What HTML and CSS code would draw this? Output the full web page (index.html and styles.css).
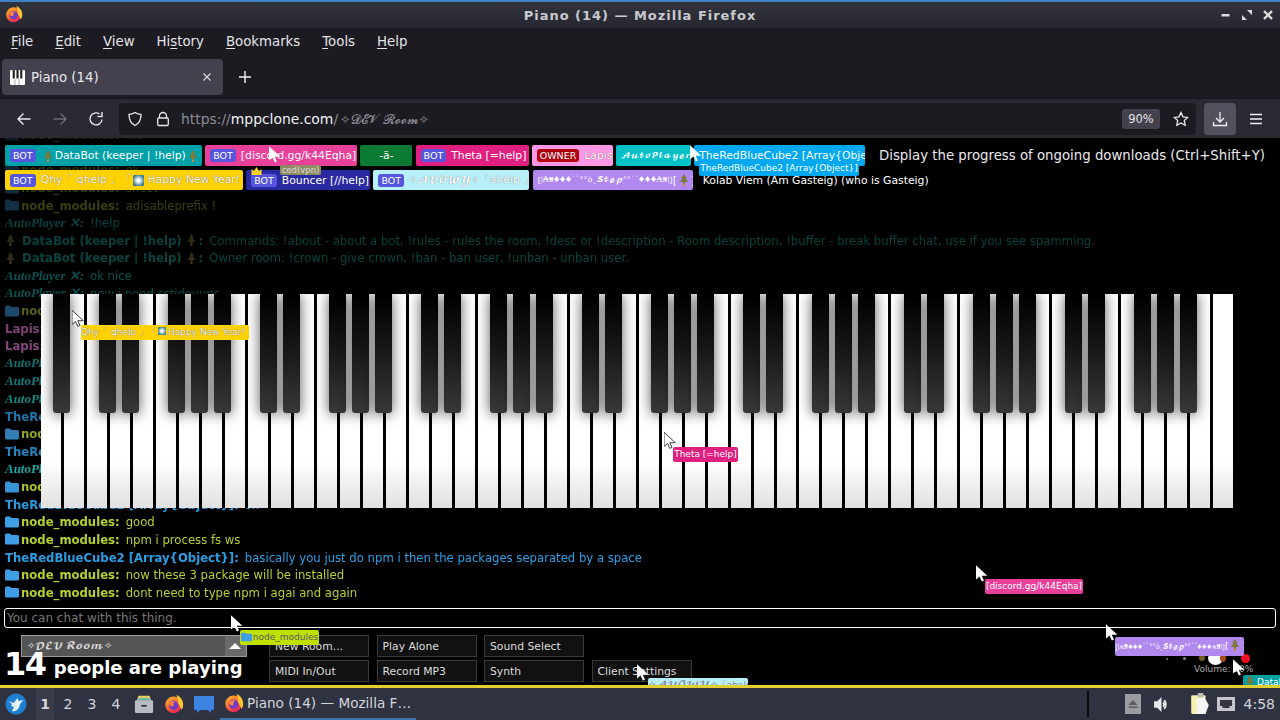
FILE: index.html
```html
<!DOCTYPE html>
<html lang="en">
<head>
<meta charset="utf-8">
<title>Piano (14) — Mozilla Firefox</title>
<link rel="stylesheet" href="styles.css">
</head>
<body>
<svg class="defs" width="0" height="0" aria-hidden="true">
  <defs>
    <linearGradient id="ffg" x1="0" y1="0" x2="0.6" y2="1"><stop offset="0" stop-color="#ffbd2e"/><stop offset=".55" stop-color="#ff6a2b"/><stop offset="1" stop-color="#e5245e"/></linearGradient>
    <symbol id="fx" viewBox="0 0 24 24">
      <circle cx="11.5" cy="13" r="10" fill="url(#ffg)"/>
      <path d="M15 1c4 2 8 6 8 12 0 3-1 5-2 6l-4-8c0-4-1-7-2-10z" fill="#ffc72e"/>
      <circle cx="11.5" cy="13.5" r="5.6" fill="#6f3bc4"/>
      <path d="M6 12c2-3 5-4 8-3l-3 2c1 1 1 3-1 4-2 0-3-1-4-3z" fill="#ff8a3c"/>
    </symbol>
    <symbol id="arrow" viewBox="0 0 14 18">
      <path d="M0 0v15.500l3.800-3.300 2.500 5.300 2.300-1-2.400-5.100h6z" fill="#fff"/>
    </symbol>
    <symbol id="tree" viewBox="0 0 10 12">
      <path d="M5 0l2.500 4H6.500L9 8H6v2.500H4V8H1l2.500-4H2.500z" fill="#7c7a3a"/>
      <rect x="4" y="9.500" width="2" height="2.500" fill="#c98a3c"/>
    </symbol>
    <symbol id="folder" viewBox="0 0 14 12">
      <path d="M0 2a1.500 1.500 0 0 1 1.500-1.500h3.500l1.500 1.500h6a1.500 1.500 0 0 1 1.500 1.500v6.500a1.500 1.500 0 0 1-1.500 1.500h-11a1.500 1.500 0 0 1-1.500-1.500z" fill="#3f9fe6"/>
    </symbol>
  </defs>
</svg>

<header class="titlebar">
  <svg class="ff-title"><use href="#fx"/></svg>
  <span class="win-title">Piano (14) — Mozilla Firefox</span>
  <div class="win-btns">
    <svg viewBox="0 0 12 12"><rect x="1.500" y="5" width="8" height="2.500" fill="#ddd"/></svg>
    <svg viewBox="0 0 12 12"><path d="M6 1h5v5zM1 6l5 5H1z" fill="#ddd"/></svg>
    <svg viewBox="0 0 12 12"><path d="M2 2l8 8M10 2l-8 8" stroke="#ddd" stroke-width="2.400"/></svg>
  </div>
</header>

<nav class="menubar">
  <span><u>F</u>ile</span><span><u>E</u>dit</span><span><u>V</u>iew</span><span>Hi<u>s</u>tory</span><span><u>B</u>ookmarks</span><span><u>T</u>ools</span><span><u>H</u>elp</span>
</nav>

<div class="tabbar">
  <div class="tab">
    <svg class="fav" viewBox="0 0 14 14"><rect width="14" height="14" rx="1" fill="#fff"/><path d="M2.500 0h2v8h-2zM6 0h2v8H6zM9.500 0h2v8h-2z" fill="#222"/><path d="M4.600 8.500v5.500M8.500 8.500v5.500" stroke="#888" stroke-width=".7"/></svg>
    <span class="tab-label">Piano (14)</span>
    <svg class="tab-x" viewBox="0 0 10 10"><path d="M1.500 1.500l7 7M8.500 1.500l-7 7" stroke="#d8d8dc" stroke-width="1.200"/></svg>
  </div>
  <svg class="plus" viewBox="0 0 14 14"><path d="M7 1v12M1 7h12" stroke="#f0f0f4" stroke-width="1.400"/></svg>
</div>

<div class="navbar">
  <svg class="nav-ico back" viewBox="0 0 16 16"><path d="M14.500 8H2M7.500 2.500L2 8l5.500 5.500" fill="none" stroke="#e8e8ec" stroke-width="1.400"/></svg>
  <svg class="nav-ico fwd" viewBox="0 0 16 16"><path d="M1.500 8H14M8.500 2.500L14 8l-5.500 5.500" fill="none" stroke="#6c6b74" stroke-width="1.400"/></svg>
  <svg class="nav-ico reload" viewBox="0 0 16 16"><path d="M14 8.500A6 6 0 1 1 11.500 3M14 1v4.500H9.500" fill="none" stroke="#e8e8ec" stroke-width="1.400"/></svg>
  <div class="urlbar">
    <svg class="url-ico" viewBox="0 0 16 16"><path d="M8 1.500c2 1.300 4 1.800 6 1.800 0 5.700-2 9.400-6 11.200-4-1.800-6-5.500-6-11.200 2 0 4-.5 6-1.800z" fill="none" stroke="#e8e8ec" stroke-width="1.300"/></svg>
    <svg class="url-ico lock" viewBox="0 0 16 16"><path d="M4.500 7V5a3.500 3.500 0 0 1 7 0v2" fill="none" stroke="#e8e8ec" stroke-width="1.300"/><rect x="2.700" y="7" width="10.600" height="7.500" rx="1.200" fill="none" stroke="#e8e8ec" stroke-width="1.300"/></svg>
    <span class="url"><span class="url-dim">https://</span>mppclone.com<span class="url-dim">/</span><span class="url-room">✧𝓓𝓔𝓥 𝓡𝓸𝓸𝓶✧</span></span>
    <span class="zoom-pill">90%</span>
    <svg class="star" viewBox="0 0 16 16"><path d="M8 1.500l2 4.300 4.700.6-3.400 3.200.9 4.700L8 12l-4.200 2.300.9-4.700L1.300 6.400 6 5.800z" fill="none" stroke="#e8e8ec" stroke-width="1.300"/></svg>
  </div>
  <div class="dl-btn"><svg viewBox="0 0 16 16"><path d="M8 1v9.500M4 7l4 4 4-4M1.500 11v3.500h13V11" fill="none" stroke="#f0f0f4" stroke-width="1.300"/></svg></div>
  <svg class="burger" viewBox="0 0 14 12"><path d="M1 1.500h12M1 6h12M1 10.500h12" stroke="#f0f0f4" stroke-width="1.400"/></svg>
</div>

<main class="page">
  <section class="stage">
    <div class="chat">
      <div class="msg"><svg class="fi"><use href="#folder"/></svg><b class="nm">node_modules:</b> <span class="nm">Int</span></div>
      <div class="msg"><svg class="fi"><use href="#folder"/></svg><b class="nm">node_modules:</b> <span class="nm">snpm</span></div>
      <div class="msg"><svg class="fi"><use href="#folder"/></svg><b class="nm">node_modules:</b> <span class="nm">ok</span></div>
      <div class="msg"><svg class="fi"><use href="#folder"/></svg><b class="nm">node_modules:</b> <span class="nm">sheet</span></div>
      <div class="msg"><svg class="fi"><use href="#folder"/></svg><b class="nm">node_modules:</b> <span class="nm">adisableprefix !</span></div>
      <div class="msg"><b class="ap">AutoPlayer ✕:</b> <span class="at">!help</span></div>
      <div class="msg"><svg class="tr"><use href="#tree"/></svg><b class="db">DataBot (keeper | !help)</b><svg class="tr"><use href="#tree"/></svg><b class="db">:</b> <span class="dt">Commands: !about - about a bot, !rules - rules the room, !desc or !description - Room description, !buffer - break buffer chat, use if you see spamming.</span></div>
      <div class="msg"><svg class="tr"><use href="#tree"/></svg><b class="db">DataBot (keeper | !help)</b><svg class="tr"><use href="#tree"/></svg><b class="db">:</b> <span class="dt">Owner room: !crown - give crown, !ban - ban user, !unban - unban user.</span></div>
      <div class="msg"><b class="ap">AutoPlayer ✕:</b> <span class="at">ok nice</span></div>
      <div class="msg"><b class="ap">AutoPlayer ✕:</b> <span class="at">now i need sstidevups</span></div>
      <div class="msg"><svg class="fi"><use href="#folder"/></svg><b class="nm">node_modules:</b> <span class="nm">no</span></div>
      <div class="msg"><b class="lp">Lapis:</b> <span class="lp">ok</span></div>
      <div class="msg"><b class="lp">Lapis:</b> <span class="lp">ok</span></div>
      <div class="msg"><b class="ap">AutoPlayer ✕:</b> <span class="at">ok</span></div>
      <div class="msg"><b class="ap">AutoPlayer ✕:</b> <span class="at">ok</span></div>
      <div class="msg"><b class="ap">AutoPlayer ✕:</b> <span class="at">ok</span></div>
      <div class="msg"><b class="bl">TheRedBlueCube2 [Array{Object}]:</b> <span class="bl">ok</span></div>
      <div class="msg"><svg class="fi"><use href="#folder"/></svg><b class="nm">node_modules:</b> <span class="nm">ok</span></div>
      <div class="msg"><b class="bl">TheRedBlueCube2 [Array{Object}]:</b> <span class="bl">ok</span></div>
      <div class="msg"><b class="ap">AutoPlayer ✕:</b> <span class="at">ok</span></div>
      <div class="msg"><svg class="fi"><use href="#folder"/></svg><b class="nm">node_modules:</b> <span class="nm">ok</span></div>
      <div class="msg"><b class="bl">TheRedBlueCube2 [Array{Object}]:</b> <span class="bl">ok</span></div>
      <div class="msg"><svg class="fi"><use href="#folder"/></svg><b class="nm">node_modules:</b> <span class="nm">good</span></div>
      <div class="msg"><svg class="fi"><use href="#folder"/></svg><b class="nm">node_modules:</b> <span class="nm">npm i process fs ws</span></div>
      <div class="msg"><b class="bl">TheRedBlueCube2 [Array{Object}]:</b> <span class="bl">basically you just do npm i then the packages separated by a space</span></div>
      <div class="msg"><svg class="fi"><use href="#folder"/></svg><b class="nm">node_modules:</b> <span class="nm">now these 3 package will be installed</span></div>
      <div class="msg"><svg class="fi"><use href="#folder"/></svg><b class="nm">node_modules:</b> <span class="nm">dont need to type npm i agai and again</span></div>
    </div>

    <div class="users">
      <div class="urow">
        <span class="pill p-databot w197"><b class="bot">BOT</b><svg class="tr2"><use href="#tree"/></svg>DataBot (keeper | !help)<svg class="tr2"><use href="#tree"/></svg></span>
        <span class="pill p-discord w152"><b class="bot">BOT</b>[discord.gg/k44Eqha]</span>
        <span class="pill p-green w52 center">-ä-</span>
        <span class="pill p-theta w113"><b class="bot">BOT</b>Theta [=help]</span>
        <span class="pill p-lapis w81"><b class="owner">OWNER</b>Lapis</span>
        <span class="pill p-auto w75"><span class="script auto">𝓐𝓾𝓽𝓸𝓟𝓵𝓪𝔂𝓮𝓻 ✕</span></span>
        <span class="pill p-cube w171">TheRedBlueCube2 [Array{Object}]</span>
      </div>
      <div class="urow r2">
        <span class="pill p-qhy w238"><b class="bot">BOT</b>Qhy「 qhelp 」「<span class="fw"></span>Happy New Year! 」</span>
        <span class="pill p-bouncer w124"><b class="bot">BOT</b>Bouncer [//help]</span>
        <span class="pill p-avowy w156"><b class="bot">BOT</b><span class="script">✧𝓐𝓥𝓞𝓦𝓨✧</span>「ahelp 」</span>
        <span class="pill p-step w160"><span class="script thin">[|₳₦♦♦♦``°°ò¸𝓢𝓽𝓮𝓹°°´´♦♦♦₳₦|]</span>[<svg class="tr2"><use href="#tree"/></svg>]</span>
        <span class="pill p-kolab">Kolab Viem (Am Gasteig) (who is Gasteig)</span>
      </div>
    </div>

    <div class="piano">
      <i class="k b"></i><i class="k"></i>
      <i class="k b"></i><i class="k b"></i><i class="k"></i><i class="k b"></i><i class="k b"></i><i class="k b"></i><i class="k"></i>
      <i class="k b"></i><i class="k b"></i><i class="k"></i><i class="k b"></i><i class="k b"></i><i class="k b"></i><i class="k"></i>
      <i class="k b"></i><i class="k b"></i><i class="k"></i><i class="k b"></i><i class="k b"></i><i class="k b"></i><i class="k"></i>
      <i class="k b"></i><i class="k b"></i><i class="k"></i><i class="k b"></i><i class="k b"></i><i class="k b"></i><i class="k"></i>
      <i class="k b"></i><i class="k b"></i><i class="k"></i><i class="k b"></i><i class="k b"></i><i class="k b"></i><i class="k"></i>
      <i class="k b"></i><i class="k b"></i><i class="k"></i><i class="k b"></i><i class="k b"></i><i class="k b"></i><i class="k"></i>
      <i class="k b"></i><i class="k b"></i><i class="k"></i><i class="k b"></i><i class="k b"></i><i class="k b"></i><i class="k"></i>
      <i class="k"></i>
    </div>
  </section>

  <div class="chat-input">You can chat with this thing.</div>

  <footer class="controls">
    <div class="room-box">
      <div class="room-select"><span class="room-name">✧𝓓𝓔𝓥 𝓡𝓸𝓸𝓶✧</span><span class="room-arrow"></span></div>
      <div class="count"><span class="count-n">14</span> people are playing</div>
    </div>
    <div class="btns">
      <div class="btn">New Room...</div><div class="btn">Play Alone</div><div class="btn">Sound Select</div><div class="btn ghost"></div>
      <div class="btn">MIDI In/Out</div><div class="btn">Record MP3</div><div class="btn">Synth</div><div class="btn">Client Settings</div>
    </div>
    <div class="volume">
      <span class="dot d1"></span><span class="dot d2"></span><span class="dot d3"></span><span class="knob"></span><span class="dot d5"></span><span class="dot d6"></span>
      <span class="vol-label">Volume: 30%</span>
    </div>
  </footer>

  <div class="mark m1"><svg class="cur"><use href="#arrow"/></svg></div>
  <div class="mark m2"><svg class="cur"><use href="#arrow"/></svg></div>
  <div class="mark m3"><svg class="cur"><use href="#arrow"/></svg></div>
  <div class="mark m4"><svg class="cur"><use href="#arrow"/></svg></div>
  <div class="mark m5"><svg class="cur"><use href="#arrow"/></svg></div>
  <div class="mark m6"><svg class="cur"><use href="#arrow"/></svg></div>
  <div class="mark m7"><svg class="cur"><use href="#arrow"/></svg></div>
  <div class="mark m8"><svg class="cur"><use href="#arrow"/></svg></div>
  <div class="mark m9"><svg class="cur"><use href="#arrow"/></svg></div>

  <span class="tag t-ced">ced(vpn)</span>
  <svg class="crown" viewBox="0 0 10 8"><path d="M0 8V2l2.500 2L5 0l2.500 4L10 2v6z" fill="#ffd21e"/></svg>
  <span class="tag t-cube">TheRedBlueCube2 [Array{Object}]</span>
  <span class="tag t-qhy">Qhy「 qhelp 」「<span class="fw small"></span>Happy New Year! 」</span>
  <span class="tag t-theta">Theta [=help]</span>
  <span class="tag t-discord">[discord.gg/k44Eqha]</span>
  <span class="tag t-node"><svg class="fi2"><use href="#folder"/></svg>node_modules</span>
  <span class="tag t-step"><span class="script thin">[|₳₦♦♦♦``°°ò¸𝓢𝓽𝓮𝓹°°´´♦♦♦₳₦|]</span>[<svg class="tr2"><use href="#tree"/></svg>]</span>
  <span class="tag t-avowy"><span class="script">✧𝓐𝓥𝓞𝓦𝓨✧</span>「ahelp 」</span>
  <span class="tag t-data"><svg class="tr2"><use href="#tree"/></svg>DataBot (keeper | !help)</span>

  <div class="tooltip">Display the progress of ongoing downloads (Ctrl+Shift+Y)</div>
</main>

<footer class="taskbar">
  <svg class="start" viewBox="0 0 22 22"><circle cx="11" cy="11" r="10.500" fill="#1f7fd0"/><path d="M3.500 8l5 2 4-5 1 3 5-1-3.500 4c-.5 5-4 8-8 7l2-4-3-1 1-2z" fill="#e8f2fb"/></svg>
  <div class="workspaces"><span class="ws on">1</span><span class="ws">2</span><span class="ws">3</span><span class="ws">4</span></div>
  <svg class="launcher" viewBox="0 0 22 22"><path d="M3 7l2-5h12l2 5z" fill="#f0d060"/><path d="M3 7l2-3h12l2 3z" fill="#6fc0a8"/><rect x="1" y="7" width="20" height="14" rx="1.500" fill="#b8bcc4"/><rect x="8" y="12" width="6" height="2" fill="#3a3c44"/></svg>
  <svg class="launcher" viewBox="0 0 24 24"><use href="#fx"/></svg>
  <svg class="launcher" viewBox="0 0 20 18"><path d="M0 1h20v14h-3v3l-3-3H6l-3 3v-3H0z" fill="#3f83e0"/></svg>
  <div class="task"><svg class="task-ico"><use href="#fx"/></svg><span class="task-label">Piano (14) — Mozilla F…</span></div>
  <div class="tray">
    <span class="tray-sep"></span>
    <span class="eject"><svg viewBox="0 0 12 12"><path d="M6 2l4.500 5h-9zM1.500 8.500h9V10h-9z" fill="#5a5c66"/></svg></span>
    <svg class="tray-ico spk" viewBox="0 0 16 16"><path d="M1 5h3l4-4v14l-4-4H1z" fill="#e8e8ec"/><path d="M10.500 4a6 6 0 0 1 0 8M9.500 6a3 3 0 0 1 0 4" fill="none" stroke="#e8e8ec" stroke-width="1.800"/></svg>
    <svg class="tray-ico clip" viewBox="0 0 18 20"><rect x="1" y="2" width="13" height="17" rx="1" fill="#f5efb0"/><path d="M7 0h5v4H7z" fill="#bbb"/><path d="M6 5l7-1 4 7-3 8H6z" fill="#f4f4f4"/></svg>
    <svg class="tray-ico net" viewBox="0 0 20 16"><path d="M1 1h18v14H1z" fill="#c4c6cc"/><path d="M4 4h12v6h-2.500v2h-7v-2H4z" fill="#34363f"/></svg>
    <span class="clock">4:58</span>
  </div>
</footer>
</body>
</html>
```
FILE: styles.css
```css
* { box-sizing: border-box; }
html, body { margin: 0; height: 720px; overflow: hidden; background: #000; }
body { display: flex; flex-direction: column; font-family: "DejaVu Sans", sans-serif; color: #e8e8ec; }
.defs { position: absolute; }

/* window title */
.titlebar { height: 28px; flex: none; display: flex; align-items: center; justify-content: center; position: relative; border-top: 2px solid #3f7fc4; background: linear-gradient(#32343d, #262730); }
.ff-title { width: 18px; height: 18px; position: absolute; left: 5px; top: 3px; }
.win-title { font-size: 13px; font-weight: 700; color: #c9cad0; letter-spacing: .98px; }
.win-btns { position: absolute; right: 6px; top: 7px; display: flex; gap: 9px; }
.win-btns svg { width: 12px; height: 12px; }

/* menus */
.menubar { height: 27px; flex: none; background: #1c1b22; display: flex; align-items: center; gap: 22px; padding-left: 11px; font-size: 13.300px; color: #e4e4e8; }
.menubar u { text-underline-offset: 2px; }

/* tabs */
.tabbar { height: 43px; flex: none; background: #1c1b22; display: flex; align-items: center; padding-left: 2px; }
.tab { width: 221px; height: 36px; margin-top: 1px; background: #42414d; border-radius: 4px; display: flex; align-items: center; padding-left: 8px; font-size: 13.300px; }
.fav { width: 15px; height: 15px; flex: none; }
.tab-label { margin-left: 6px; flex: 1; color: #e8e8ec; }
.tab-x { width: 10px; height: 10px; margin-right: 11px; }
.plus { width: 14px; height: 14px; margin-left: 15px; }

/* toolbar */
.navbar { height: 40px; flex: none; background: #2b2a33; border-top: 1px solid #16151b; display: flex; align-items: center; }
.nav-ico { width: 16px; height: 16px; flex: none; }
.back { margin-left: 16px; }
.fwd { margin-left: 20px; }
.reload { margin-left: 20px; }
.urlbar { width: 1077px; height: 32px; margin-left: 15px; background: #1c1b22; border-radius: 4px; display: flex; align-items: center; padding-left: 8px; }
.url-ico { width: 16px; height: 16px; flex: none; }
.url-ico.lock { margin-left: 12px; }
.url { margin-left: 10px; padding-top: 1px; font-size: 13.900px; color: #f0f0f4; flex: 1; white-space: nowrap; }
.url-dim { color: #8d8c95; }
.url-room { color: #8d8c95; font-size: 12.500px; margin-left: 2px; }
.zoom-pill { width: 38px; height: 20px; background: #42414d; border-radius: 3px; font-size: 11.500px; text-align: center; line-height: 20px; color: #e4e4e8; }
.star { width: 16px; height: 16px; margin-left: 13px; margin-right: 7px; }
.dl-btn { width: 32px; height: 32px; margin-left: 8px; background: #52525e; border-radius: 4px; display: flex; align-items: center; justify-content: center; }
.dl-btn svg { width: 16px; height: 16px; }
.burger { width: 14px; height: 12px; margin-left: 13px; }

/* page */
.page { height: 550px; flex: none; position: relative; background: #000; display: flex; flex-direction: column; overflow: hidden; }
.stage { height: 463px; flex: none; position: relative; overflow: hidden; z-index: 0; }
.chat { position: absolute; left: 0; right: 0; top: 0; bottom: 0; display: flex; flex-direction: column; justify-content: flex-end; padding-left: 5px; font-family: "DejaVu Sans Condensed", "DejaVu Sans", sans-serif; font-size: 12.960px; -webkit-mask-image: linear-gradient(rgba(0,0,0,.18) 0, rgba(0,0,0,.3) 70px, rgba(0,0,0,.45) 170px, rgba(0,0,0,.9) 340px, #000 380px); mask-image: linear-gradient(rgba(0,0,0,.18) 0, rgba(0,0,0,.3) 70px, rgba(0,0,0,.45) 170px, rgba(0,0,0,.9) 340px, #000 380px); }
.msg { height: 17.600px; flex: none; display: flex; align-items: center; white-space: pre; gap: 6px; }
.fi { width: 14px; height: 12px; margin-right: -4px; flex: none; }
.tr { width: 11px; height: 12px; flex: none; }
.db + .tr { margin-left: -2px; }
.db + .tr + .db { margin-left: -4px; }
.nm { color: #b4d02e; }
.bl { color: #2b9fe6; }
.ap { color: #18c2c0; font-family: "Liberation Serif", serif; font-style: italic; }
.at { color: #18c2c0; }
.db, .dt { color: #17b4a8; }
.lp { color: #f080e0; }

/* participants */
.users { position: absolute; left: 5px; top: 7px; display: flex; flex-direction: column; gap: 4px; }
.urow { display: flex; gap: 3.200px; }
.pill { height: 21px; flex: none; border-radius: 2px; display: flex; align-items: center; padding-left: 5px; font-size: 10.800px; color: #fff; white-space: nowrap; overflow: hidden; }
.r2 .pill { height: 20px; }
.center { justify-content: center; padding-left: 0; }
.bot, .owner { font-weight: 400; font-size: 9.500px; border-radius: 3px; margin-right: 5px; padding: 1px 3px; flex: none; line-height: 11px; }
.bot { background: #5555dd; color: #fff; text-shadow: none; }
.owner { background: #b00010; color: #fff; text-shadow: none; }
.script { font-family: "DejaVu Math TeX Gyre", "DejaVu Serif", "Liberation Serif", serif; font-size: 9.500px; font-weight: 400; }
.script.auto { font-size: 8px; }
.script.thin { font-size: 8px; }
.tr2 { width: 10px; height: 12px; margin: 0 2px; flex: none; vertical-align: -2px; }
.fw { width: 11px; height: 11px; background: radial-gradient(#fff 15%, #3a7a90 75%); display: inline-block; margin: 0 3px 0 1px; border-radius: 1px; flex: none; }
.fw.small { width: 8px; height: 8px; margin-right: 2px; }
.w197 { width: 197px; } .w152 { width: 152px; } .w52 { width: 52px; } .w113 { width: 113px; } .w81 { width: 81px; } .w75 { width: 75px; } .w171 { width: 171px; } .w238 { width: 238px; } .w124 { width: 124px; } .w156 { width: 156px; } .w160 { width: 160px; }
.p-databot { background: #00a0a8; }
.p-discord { background: #e9409a; }
.p-green { background: #0b7a32; }
.p-theta { background: #e02080; }
.p-lapis { background: #ff96e6; text-shadow: 0 0 1px rgba(0,0,0,.6); }
.p-auto { background: #00c0c8; }
.p-cube { background: #00a8f0; }
.p-qhy { background: #ffd200; text-shadow: 0 0 1px rgba(0,0,0,.7); }
.p-bouncer { background: #2a2aa0; }
.p-avowy { background: #b8f0fa; text-shadow: 0 0 1px rgba(0,0,0,.6); }
.p-step { background: #b088ee; }
.p-kolab { background: transparent; margin-left: 4px; padding-left: 3px; }

/* keyboard */
.piano { position: absolute; z-index: 0; left: 41px; top: 156px; width: 1192px; height: 214px; display: flex; background: #000; }
.k { flex: 1 0 0; position: relative; margin-right: 3px; background: linear-gradient(#fff 0, #fff 78%, #e0e0e0 100%); }
.k:last-child { margin-right: 0; }
.k.b::after { content: ""; position: absolute; z-index: 1; right: -9.500px; top: 0; width: 17px; height: 119px; border-radius: 0 0 3px 3px; background: linear-gradient(#000 0, #161616 45%, #383838 100%); box-shadow: 0 1px 14px rgba(0,0,0,.65); }

/* input row */
.chat-input { height: 20px; flex: none; margin: 7px 4px 0; border: 1px solid #fff; border-radius: 3px; padding-left: 2px; line-height: 18px; font-size: 12px; color: #777; }

/* controls */
.controls { height: 60px; flex: none; display: flex; padding-top: 7px; }
.room-box { width: 247px; margin-left: 4px; flex: none; }
.room-select { width: 226px; height: 22px; margin-left: 17px; background: #555; border: 1px solid #999; display: flex; align-items: stretch; }
.room-name { flex: 1; padding-left: 5px; font-size: 9.700px; line-height: 20px; color: #ddd; font-family: "DejaVu Math TeX Gyre", "DejaVu Serif", serif; }
.room-arrow { width: 21px; background: #6a6a6a; position: relative; }
.room-arrow::after { content: ""; position: absolute; left: 4px; top: 7px; border: 6px solid transparent; border-top: 0; border-bottom-color: #fff; }
.count { font-size: 18px; font-weight: 700; color: #fff; margin-top: -8px; line-height: 30px; white-space: nowrap; }
.count-n { font-size: 32px; vertical-align: -1px; letter-spacing: -1.500px; margin-right: 2px; }
.btns { margin-left: 18px; display: grid; grid-template-columns: repeat(4, 100px); grid-auto-rows: 22px; gap: 3px 7.500px; }
.btn { background: #111; border: 1px solid #3a3a3a; font-size: 10.800px; line-height: 21px; padding-left: 5px; color: #ddd; white-space: nowrap; }
.btn.ghost { visibility: hidden; }
.volume { position: relative; margin-left: auto; width: 110px; margin-right: 20px; }
.dot { position: absolute; border-radius: 50%; }
.d1 { left: 16px; top: 23px; width: 2px; height: 2px; background: #777; }
.d2 { left: 33px; top: 22px; width: 3px; height: 3px; background: #886; }
.d3 { left: 49px; top: 20px; width: 6px; height: 6px; background: #775c20; }
.knob { position: absolute; left: 58px; top: 16px; width: 15px; height: 14px; border-radius: 50%; background: #fff; }
.d5 { left: 70px; top: 19px; width: 6px; height: 8px; background: #a8481e; }
.d6 { left: 90.500px; top: 19px; width: 9px; height: 9px; background: #f01020; }
.vol-label { position: absolute; left: 44px; top: 29px; font-size: 9px; color: #aaa; white-space: nowrap; }

/* remote cursors and their names */
.mark { position: absolute; width: 13px; height: 17px; }
.cur { width: 13px; height: 17px; display: block; }
.m1 { left: 269px; top: 8px; } .m2 { left: 690px; top: 7px; } .m3 { left: 72px; top: 172px; } .m4 { left: 664px; top: 294px; } .m5 { left: 976px; top: 427px; } .m6 { left: 231px; top: 477px; } .m7 { left: 1106px; top: 486px; } .m8 { left: 637px; top: 526px; } .m9 { left: 1233px; top: 521px; }
.m3 .cur, .m4 .cur { stroke: #333; }
.tag { position: absolute; height: 15px; border-radius: 2px; display: block; text-align: center; line-height: 15px; font-size: 9px; color: #fff; white-space: nowrap; overflow: hidden; }
.t-ced { left: 280px; top: 27px; height: 10px; line-height: 10px; width: 41px; background: #8e8c62; color: #ddd; font-size: 8.500px; }
.crown { position: absolute; left: 251px; top: 29px; width: 11px; height: 8px; }
.t-cube { left: 699px; top: 23px; width: 160px; background: #00a8f0; }
.t-qhy { left: 81px; top: 187px; width: 168px; background: #ffd200; text-shadow: 0 0 1px rgba(0,0,0,.8); }
.t-theta { left: 673px; top: 309px; width: 65px; background: #e02080; }
.t-discord { left: 985px; top: 441px; width: 98px; background: #e9409a; }
.t-node { left: 240px; top: 492px; width: 79px; background: #c0e000; color: #557; }
.fi2 { width: 11px; height: 10px; margin-right: 1px; vertical-align: -2px; }
.t-step { left: 1115px; top: 499px; width: 129px; height: 19px; line-height: 19px; background: #b088ee; }
.t-step .thin { font-size: 6.500px; }
.t-avowy { left: 648px; top: 540px; width: 100px; height: 15px; background: #b8f0fa; color: #889; }
.t-data { left: 1243px; top: 537px; width: 60px; height: 13px; line-height: 13px; background: #00a0a0; text-align: left; }
.tooltip { position: absolute; left: 867px; top: -3px; width: 413px; height: 40px; border-radius: 4px; background: #000; padding-left: 12px; font-size: 13.300px; line-height: 41px; color: #e8e8ec; white-space: nowrap; }

/* desktop panel */
.taskbar { height: 35px; margin-top: -3px; position: relative; flex: 1; border-top: 3px solid #e3cf30; background: #2f3241; display: flex; align-items: center; font-size: 14px; color: #d4d6dc; }
.start { width: 22px; height: 22px; margin-left: 5px; flex: none; }
.workspaces { display: flex; margin-left: 9px; }
.ws { width: 24px; height: 32px; line-height: 32px; text-align: center; }
.ws.on { background: #383b4a; font-weight: 700; width: 18px; margin-right: 2px; }
.launcher { width: 20px; height: 20px; margin-left: 10px; flex: none; }
.workspaces + .launcher { margin-left: 6px; }
.task { width: 196px; height: 32px; margin-left: 6px; display: flex; align-items: center; padding-left: 4px; border-bottom: 2px solid #3f74a8; }
.task-ico { width: 20px; height: 20px; flex: none; }
.task-label { margin-left: 3px; white-space: nowrap; font-size: 13.600px; }
.tray { margin-left: auto; display: flex; align-items: center; padding-right: 5px; }
.tray-sep { width: 2px; height: 26px; background: #0a0a0a; margin-right: 36px; }
.eject { width: 16px; height: 20px; background: #9a9ca2; display: flex; align-items: center; justify-content: center; margin-right: 12px; }
.eject svg { width: 12px; height: 12px; }
.tray-ico { flex: none; }
.spk { width: 17px; height: 17px; margin-right: 20px; }
.clip { width: 20px; height: 22px; margin-right: 6px; }
.net { width: 20px; height: 16px; margin-right: 8px; }
.clock { font-size: 14px; color: #d4d6dc; }
```
